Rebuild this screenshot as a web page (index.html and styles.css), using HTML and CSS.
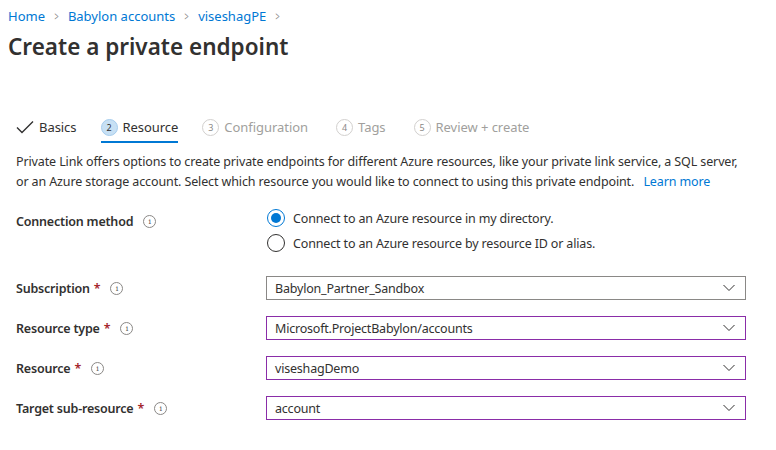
FILE: index.html
```html
<!DOCTYPE html>
<html>
<head>
<meta charset="utf-8">
<link rel="stylesheet" href="styles.css">
</head>
<body>
<nav class="crumbs">
  <a class="crumb">Home</a><span class="sep">&gt;</span>
  <a class="crumb">Babylon accounts</a><span class="sep">&gt;</span>
  <a class="crumb">viseshagPE</a><span class="sep">&gt;</span>
</nav>
<h1 class="title">Create a private endpoint</h1>

<div class="tabs">
  <div class="tab done">
    <svg class="check" width="18" height="14" viewBox="0 0 18 14"><path d="M1 7.5 L6 12.5 L17 1.5" fill="none" stroke="#323130" stroke-width="1.4"/></svg>
    <span>Basics</span>
  </div>
  <div class="tab active">
    <span class="num">2</span><span>Resource</span>
  </div>
  <div class="tab off"><span class="num">3</span><span>Configuration</span></div>
  <div class="tab off"><span class="num">4</span><span>Tags</span></div>
  <div class="tab off"><span class="num">5</span><span>Review + create</span></div>
</div>

<p class="intro">Private Link offers options to create private endpoints for different Azure resources, like your private link service, a SQL server,<br>or an Azure storage account. Select which resource you would like to connect to using this private endpoint. <a class="link">Learn more</a></p>

<div class="form">
  <div class="label conn">Connection method <span class="info">i</span></div>
  <div class="radios">
    <label class="radio"><span class="dot on"></span>Connect to an Azure resource in my directory.</label>
    <label class="radio"><span class="dot"></span>Connect to an Azure resource by resource ID or alias.</label>
  </div>

  <div class="label">Subscription <span class="req">*</span> <span class="info">i</span></div>
  <div class="select gray">Babylon_Partner_Sandbox<svg class="chev" width="12" height="8" viewBox="0 0 12 8"><path d="M0.5 1 L6 6.5 L11.5 1" fill="none" stroke="#323130" stroke-width="1"/></svg></div>

  <div class="label">Resource type <span class="req">*</span> <span class="info">i</span></div>
  <div class="select purple">Microsoft.ProjectBabylon/accounts<svg class="chev" width="12" height="8" viewBox="0 0 12 8"><path d="M0.5 1 L6 6.5 L11.5 1" fill="none" stroke="#323130" stroke-width="1"/></svg></div>

  <div class="label">Resource <span class="req">*</span> <span class="info">i</span></div>
  <div class="select purple">viseshagDemo<svg class="chev" width="12" height="8" viewBox="0 0 12 8"><path d="M0.5 1 L6 6.5 L11.5 1" fill="none" stroke="#323130" stroke-width="1"/></svg></div>

  <div class="label">Target sub-resource <span class="req">*</span> <span class="info">i</span></div>
  <div class="select purple">account<svg class="chev" width="12" height="8" viewBox="0 0 12 8"><path d="M0.5 1 L6 6.5 L11.5 1" fill="none" stroke="#323130" stroke-width="1"/></svg></div>
</div>
</body>
</html>
```
FILE: styles.css
```css
* { box-sizing: border-box; }
body {
  margin: 0;
  background: #fff;
  font-family: "Noto Sans", "Open Sans", sans-serif;
  font-size: 12.5px;
  color: #323130;
  width: 776px;
  height: 450px;
  overflow: hidden;
}
.crumbs {
  display: flex;
  align-items: center;
  height: 20px;
  margin: 6px 0 0 8px;
  font-size: 13px;
}
.crumb { color: #0078d4; }
.sep {
  color: #8a8886;
  margin: 0 8px;
  font-size: 12px;
  transform: scaleX(0.6);
}
.title {
  margin: 5px 0 0 8px;
  font-size: 22.5px;
  font-weight: 600;
  line-height: 32px;
  color: #323130;
}
.tabs {
  display: flex;
  align-items: stretch;
  margin: 48px 0 0 16px;
  height: 32px;
}
.tab {
  display: flex;
  align-items: center;
  gap: 5px;
  font-size: 13px;
  margin-right: 24px;
  border-bottom: 2px solid transparent;
  padding-top: 2px;
  letter-spacing: -0.05px;
}
.tab.done { margin-right: 24px; gap: 5px; }
.tab.active { border-bottom-color: #0078d4; color: #323130; }
.tab.off { color: #a19f9d; margin-right: 28px; }
.num {
  width: 17px;
  height: 17px;
  border-radius: 50%;
  display: inline-flex;
  align-items: center;
  justify-content: center;
  font-size: 9px;
  border: 1px solid #d2d0ce;
  color: #8a8886;
}
.active .num {
  background: #c7e0f4;
  border-color: #a6cdee;
  color: #323130;
}
.intro {
  margin: 9px 0 0 16px;
  line-height: 20px;
  font-size: 12.5px;
  white-space: nowrap;
  letter-spacing: -0.12px;
}
.link { color: #0078d4; margin-left: 6px; }
.form {
  display: grid;
  grid-template-columns: 250px 480px;
  margin: 16px 0 0 16px;
  row-gap: 16px;
  align-items: center;
}
.label {
  font-weight: 600;
  font-size: 12.5px;
  display: flex;
  align-items: center;
  gap: 4px;
  letter-spacing: -0.2px;
}
.label.conn { align-self: start; padding-top: 5px; gap: 4px; }
.req { color: #a4262c; }
.info {
  display: inline-flex;
  align-items: center;
  justify-content: center;
  width: 13px;
  height: 13px;
  border: 1px solid #8a8886;
  border-radius: 50%;
  font-size: 8px;
  font-weight: 400;
  color: #605e5c;
  margin-left: 6px;
  font-family: "DejaVu Serif", serif;
}
.radios {
  display: flex;
  flex-direction: column;
  gap: 5px;
  margin-bottom: 7px;
}
.radio {
  display: flex;
  align-items: center;
  gap: 8px;
  height: 20px;
  font-size: 12.5px;
  letter-spacing: -0.15px;
  margin-left: 1px;
}
.dot {
  width: 18px;
  height: 18px;
  border-radius: 50%;
  border: 1px solid #323130;
  position: relative;
}
.dot.on { border-color: #0078d4; }
.dot.on::after {
  content: "";
  position: absolute;
  left: 3px; top: 3px;
  width: 10px; height: 10px;
  border-radius: 50%;
  background: #0078d4;
}
.select {
  height: 24px;
  border: 1px solid #8a8886;
  display: flex;
  align-items: center;
  justify-content: space-between;
  padding: 0 10px 0 8px;
  font-size: 12.5px;
  letter-spacing: -0.2px;
}
.select.purple { border-color: #8a2da8; }
.chev { flex: none; }
```
